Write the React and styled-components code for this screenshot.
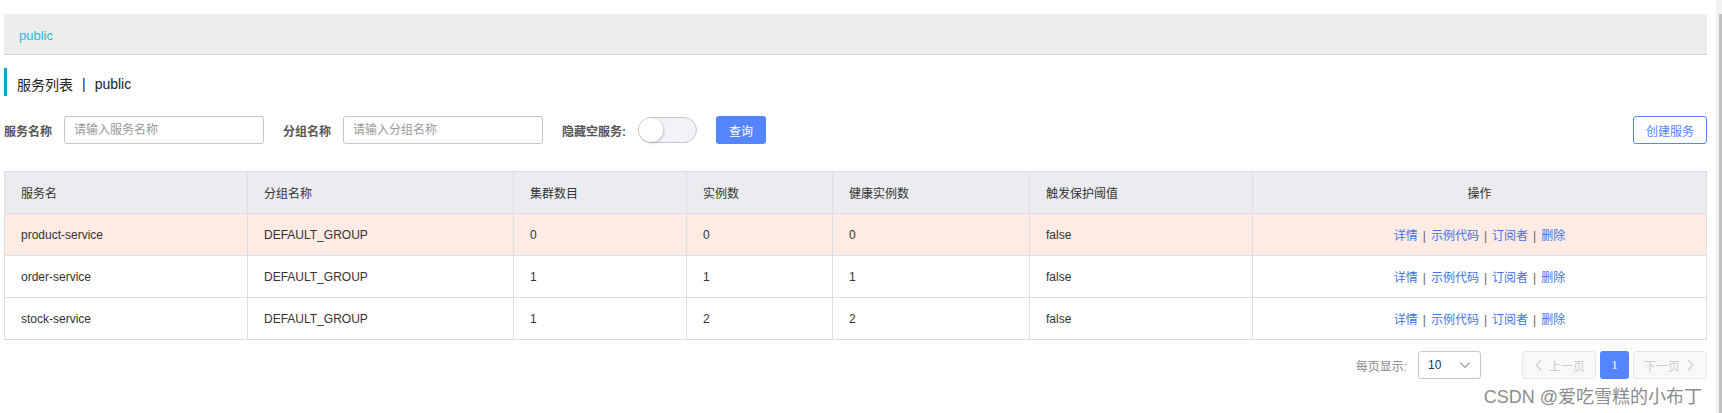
import React, { useState } from "react"
import styled, { createGlobalStyle } from "styled-components"

const GlobalStyle = createGlobalStyle`
  html, body {
    margin: 0;
    padding: 0;
    background: #fff;
  }
  body {
    font-family: "Liberation Sans", "Noto Sans CJK SC", sans-serif;
    font-size: 12px;
    color: #333;
  }
`

const services = [
  { name: "product-service", group: "DEFAULT_GROUP", clusters: 0, instances: 0, healthy: 0, threshold: "false", active: true },
  { name: "order-service", group: "DEFAULT_GROUP", clusters: 1, instances: 1, healthy: 1, threshold: "false" },
  { name: "stock-service", group: "DEFAULT_GROUP", clusters: 1, instances: 2, healthy: 2, threshold: "false" },
]

const columns = [
  { title: "服务名", width: 243 },
  { title: "分组名称", width: 266 },
  { title: "集群数目", width: 173 },
  { title: "实例数", width: 146 },
  { title: "健康实例数", width: 197 },
  { title: "触发保护阈值", width: 223 },
  { title: "操作", width: 454, center: true },
]

const Chevron = ({ dir = "down", size = 12, color = "#999" }) => {
  const points = {
    down: "2,4 6,8 10,4",
    left: "8,1 3,6 8,11",
    right: "4,1 9,6 4,11",
  }[dir]
  return (
    <svg width={size} height={size} viewBox="0 0 12 12">
      <polyline points={points} fill="none" stroke={color} strokeWidth="1.1" />
    </svg>
  )
}

const App = () => {
  const [hideEmpty, setHideEmpty] = useState(false)

  return (
    <Page>
      <GlobalStyle />
      <Main>
        <Breadcrumb>
          <Crumb>public</Crumb>
        </Breadcrumb>

        <PageTitle>
          服务列表<TitleSep>|</TitleSep>public
        </PageTitle>

        <SearchBar>
          <SearchForm>
            <FormItem>
              <FormLabel>服务名称</FormLabel>
              <TextInput placeholder="请输入服务名称" />
            </FormItem>
            <FormItem>
              <FormLabel>分组名称</FormLabel>
              <TextInput placeholder="请输入分组名称" />
            </FormItem>
            <FormItem>
              <FormLabel>隐藏空服务:</FormLabel>
              <Switch $on={hideEmpty} onClick={() => setHideEmpty(!hideEmpty)}>
                <Knob $on={hideEmpty} />
              </Switch>
            </FormItem>
            <PrimaryButton>查询</PrimaryButton>
          </SearchForm>
          <OutlineButton>创建服务</OutlineButton>
        </SearchBar>

        <Table>
          <colgroup>
            {columns.map((c) => (
              <col key={c.title} style={{ width: c.width }} />
            ))}
          </colgroup>
          <thead>
            <tr>
              {columns.map((c) => (
                <Th key={c.title} $center={c.center}>
                  {c.title}
                </Th>
              ))}
            </tr>
          </thead>
          <tbody>
            {services.map((s) => (
              <Row key={s.name} $active={s.active}>
                <Td>{s.name}</Td>
                <Td>{s.group}</Td>
                <Td>{s.clusters}</Td>
                <Td>{s.instances}</Td>
                <Td>{s.healthy}</Td>
                <Td>{s.threshold}</Td>
                <Td $center>
                  <Link>详情</Link>
                  <LinkSep>|</LinkSep>
                  <Link>示例代码</Link>
                  <LinkSep>|</LinkSep>
                  <Link>订阅者</Link>
                  <LinkSep>|</LinkSep>
                  <Link>删除</Link>
                </Td>
              </Row>
            ))}
          </tbody>
        </Table>

        <Pagination>
          <PageSizeLabel>每页显示:</PageSizeLabel>
          <PageSize>
            <span>10</span>
            <Chevron dir="down" size={14} color="#999" />
          </PageSize>
          <PagerButtons>
            <PagerButton disabled>
              <Chevron dir="left" size={12} color="#ccc" />
              上一页
            </PagerButton>
            <PageNumber>1</PageNumber>
            <PagerButton disabled>
              下一页
              <Chevron dir="right" size={12} color="#ccc" />
            </PagerButton>
          </PagerButtons>
        </Pagination>

        <Watermark>CSDN @爱吃雪糕的小布丁</Watermark>
      </Main>
      <ScrollTrack>
        <ScrollThumb />
      </ScrollTrack>
    </Page>
  )
}

export default App

const Page = styled.div`
  display: flex;
  width: 1722px;
  height: 413px;
  overflow: hidden;
`

const Main = styled.div`
  position: relative;
  flex: 1;
  padding: 14px 9px 0 4px;
`

const Breadcrumb = styled.div`
  display: flex;
  align-items: center;
  height: 40px;
  padding: 3px 0 0 15px;
  box-sizing: border-box;
  background: #ededed;
  border-bottom: 1px solid #d2d2d2;
  height: 41px;
`

const Crumb = styled.span`
  color: #2bb8da;
  font-size: 13px;
`

const PageTitle = styled.h2`
  display: flex;
  align-items: center;
  box-sizing: border-box;
  height: 28px;
  margin: 13px 0 0;
  padding: 3px 0 0 10px;
  border-left: 3px solid #0ea0d8;
  font-size: 14px;
  font-weight: normal;
  color: #222;
`

const TitleSep = styled.span`
  margin: 0 9px;
`

const SearchBar = styled.div`
  display: flex;
  align-items: center;
  justify-content: space-between;
  margin-top: 20px;
`

const SearchForm = styled.div`
  display: flex;
  align-items: center;
  gap: 19px;
`

const FormItem = styled.div`
  display: flex;
  align-items: center;
`

const FormLabel = styled.label`
  margin-right: 12px;
  font-size: 12px;
  font-weight: bold;
  color: #555;
  white-space: nowrap;
`

const TextInput = styled.input`
  box-sizing: border-box;
  width: 200px;
  height: 28px;
  padding: 0 9px;
  border: 1px solid #c4c6cf;
  border-radius: 3px;
  font-family: inherit;
  font-size: 12px;
  color: #333;
  outline: 0;
  &::placeholder {
    color: #999;
  }
`

const Switch = styled.div`
  box-sizing: border-box;
  position: relative;
  width: 59px;
  height: 26px;
  border: 1px solid #c4c6cf;
  border-radius: 13px;
  background: ${(p) => (p.$on ? "#5584ff" : "#f2f3f7")};
  cursor: pointer;
`

const Knob = styled.span`
  position: absolute;
  top: 0;
  left: ${(p) => (p.$on ? "33px" : "0")};
  width: 24px;
  height: 24px;
  border-radius: 50%;
  background: #fff;
  box-shadow: 1px 1px 3px rgba(0, 0, 0, 0.2);
`

const PrimaryButton = styled.button`
  width: 50px;
  height: 28px;
  padding: 0;
  border: 0;
  border-radius: 3px;
  background: #5584ff;
  color: #fff;
  font-family: inherit;
  font-size: 12px;
  cursor: pointer;
`

const OutlineButton = styled.button`
  box-sizing: border-box;
  width: 74px;
  height: 28px;
  border: 1px solid #5584ff;
  border-radius: 3px;
  background: #fff;
  color: #5584ff;
  font-family: inherit;
  font-size: 12px;
  cursor: pointer;
`

const Table = styled.table`
  width: 100%;
  margin-top: 27px;
  border-collapse: collapse;
  table-layout: fixed;
  border: 1px solid #dcdee3;
`

const Th = styled.th`
  height: 41px;
  padding: 0 16px;
  background: #ebecf0;
  border-right: 1px solid #dcdee3;
  border-bottom: 1px solid #dcdee3;
  font-size: 12px;
  font-weight: normal;
  color: #333;
  text-align: ${(p) => (p.$center ? "center" : "left")};
`

const Row = styled.tr`
  background: ${(p) => (p.$active ? "#fdebe4" : "#fff")};
`

const Td = styled.td`
  height: 41px;
  padding: 0 16px;
  border-right: 1px solid #dcdee3;
  border-bottom: 1px solid #dcdee3;
  font-size: 12px;
  color: #333;
  text-align: ${(p) => (p.$center ? "center" : "left")};
`

const Link = styled.a`
  color: #3f73e6;
  cursor: pointer;
`

const LinkSep = styled.span`
  margin: 0 5px;
  color: #666;
`

const Pagination = styled.div`
  display: flex;
  align-items: center;
  justify-content: flex-end;
  margin-top: 11px;
`

const PageSizeLabel = styled.span`
  margin-right: 11px;
  color: #888;
  font-size: 12px;
`

const PageSize = styled.div`
  box-sizing: border-box;
  display: flex;
  align-items: center;
  justify-content: space-between;
  width: 63px;
  height: 28px;
  padding: 0 8px 0 9px;
  border: 1px solid #c4c6cf;
  border-radius: 3px;
  color: #333;
  font-size: 12px;
`

const PagerButtons = styled.div`
  display: flex;
  align-items: center;
  gap: 4px;
  margin-left: 41px;
`

const PagerButton = styled.button`
  box-sizing: border-box;
  display: flex;
  align-items: center;
  justify-content: center;
  gap: 4px;
  width: 74px;
  height: 28px;
  padding: 0;
  border: 1px solid #e6e7eb;
  border-radius: 3px;
  background: #f7f8fa;
  color: #ccc;
  font-family: inherit;
  font-size: 12px;
`

const PageNumber = styled.button`
  width: 29px;
  height: 28px;
  padding: 0;
  border: 0;
  border-radius: 3px;
  background: #5584ff;
  color: #fff;
  font-family: "Liberation Serif", serif;
  font-size: 13px;
`

const Watermark = styled.div`
  position: absolute;
  right: 14px;
  top: 382px;
  color: #8c8c8c;
  font-size: 18px;
  white-space: nowrap;
  pointer-events: none;
`

const ScrollTrack = styled.div`
  display: flex;
  justify-content: flex-end;
  width: 6px;
  background: #f1f1f1;
`

const ScrollThumb = styled.div`
  width: 3px;
  margin-top: 14px;
  background: #c1c1c1;
`
